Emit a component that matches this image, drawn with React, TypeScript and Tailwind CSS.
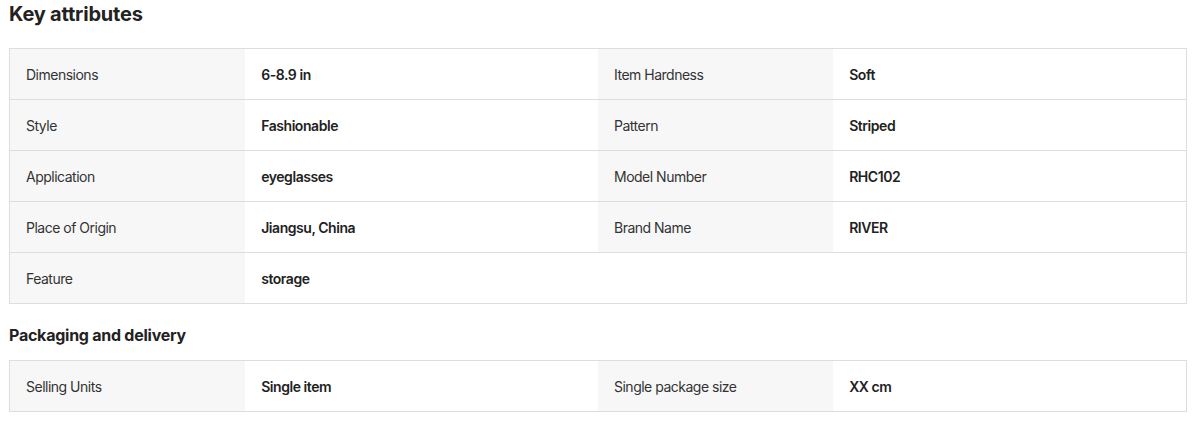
const keyAttributes: [string, string][][] = [
  [['Dimensions', '6-8.9 in'], ['Item Hardness', 'Soft']],
  [['Style', 'Fashionable'], ['Pattern', 'Striped']],
  [['Application', 'eyeglasses'], ['Model Number', 'RHC102']],
  [['Place of Origin', 'Jiangsu, China'], ['Brand Name', 'RIVER']],
  [['Feature', 'storage']],
] as any

const packaging: [string, string][][] = [
  [['Selling Units', 'Single item'], ['Single package size', 'XX cm']],
] as any

function AttrTable({ rows }: { rows: [string, string][][] }) {
  return (
    <div className="w-[1178px] border border-[#dddddd]">
      {rows.map((row, i) => (
        <div
          key={i}
          className={`flex h-[50px] ${i < rows.length - 1 ? 'border-b border-[#dddddd] h-[51px]' : ''}`}
        >
          {[0, 1].map((j) => {
            const cell = row[j]
            return (
              <div key={j} className="flex w-1/2">
                <div
                  className={`w-[40%] flex items-center pl-4 pt-[2px] text-sm tracking-[-0.5px] text-[#333333] ${cell ? 'bg-[#f7f7f7]' : ''}`}
                >
                  {cell?.[0]}
                </div>
                <div className="w-[60%] flex items-center pl-4 pt-[2px] text-sm tracking-[-0.45px] font-semibold text-[#222222]">
                  {cell?.[1]}
                </div>
              </div>
            )
          })}
        </div>
      ))}
    </div>
  )
}

export default function App() {
  return (
    <div className="bg-white min-h-[425px] px-[9px] pt-[2px] font-['Inter',sans-serif]">
      <h2 className="text-xl font-bold tracking-[-0.2px] text-[#222222] leading-[24px]">Key attributes</h2>
      <div className="mt-[22px]">
        <AttrTable rows={keyAttributes} />
      </div>
      <h3 className="mt-[21px] text-base font-bold tracking-[-0.25px] text-[#222222] leading-[20px]">Packaging and delivery</h3>
      <div className="mt-[15px]">
        <AttrTable rows={packaging} />
      </div>
    </div>
  )
}
